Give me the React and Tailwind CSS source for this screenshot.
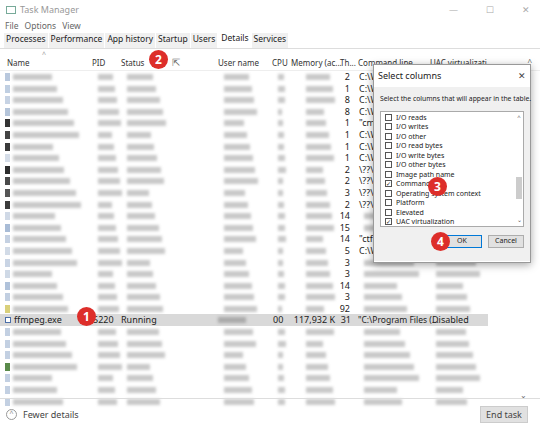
import React from "react";

const cols = [
  { x: 7, w: 70 }, { x: 92, w: 25 }, { x: 121, w: 40 }, { x: 218, w: 35 },
  { x: 272, w: 8 }, { x: 300, w: 30 }, { x: 340, w: 12 }, { x: 358, w: 60 }, { x: 430, w: 45 },
];
const threads = ["2","1","8","8","1","1","1","1","2","2","3","2","14","15","14","5","3","3","14","3","92"];
const cmds = ["C:\\W","C:\\W","C:\\W","C:\\W","\"cmd","C:\\W","C:\\W","C:\\W","\\??\\C","\\??\\C","\\??\\C","\\??\\C","","","\"ctfm","C:\\W","","","","",""];
const icons = ["#b9c8dd","#c0cfe2","#c7d3e4","#b5c5da","#333","#444","#3a3a3a","#d5dde8","#2d2d2d","#4a4a4a","#555","#3c3c3c","#d0d9e6","#a9bcd6","#c5d1e2","#d2dbe7","#c9d4e4","#cfd9e6","#b0c2da","#c2cfe1","#d9d07a"];

function r(i, k) { return ((i * 37 + k * 53) % 17) / 17; }

function BlurRow({ i, thr, cmd, icon }) {
  return (
    <div className="relative h-[11.6px]">
      <div className="absolute left-[5px] top-[2px] w-[5px] h-[8px] blur-[0.5px]" style={{ background: icon }} />
      {[0,1,2,3,4,5,7,8].map((k) => {
        if (k === 7 && cmd) return null;
        const w = cols[k].w * (0.55 + 0.45 * r(i, k));
        return <div key={k} className="absolute top-[3px] h-[6px] bg-[#c8c8c8] blur-[1.5px]" style={{ left: cols[k].x + 6, width: w }} />;
      })}
      <div className="absolute top-0 text-[9px] leading-[11.6px] text-[#222] text-right w-[20px]" style={{ left: 330 }}>{thr}</div>
      {cmd && <div className="absolute left-[359px] top-0 text-[9px] leading-[11.6px] text-[#222]">{cmd}</div>}
    </div>
  );
}

function Badge({ n, x, y }) {
  return <div className="absolute w-[19px] h-[19px] rounded-full bg-[#dd2e2a] text-white text-[12px] font-bold flex items-center justify-center" style={{ left: x, top: y }}>{n}</div>;
}

const opts = [["I/O reads",0],["I/O writes",0],["I/O other",0],["I/O read bytes",0],["I/O write bytes",0],["I/O other bytes",0],["Image path name",0],["Command line",1],["Operating system context",0],["Platform",0],["Elevated",0],["UAC virtualization",1]];

export default function App() {
  return (
    <div className="relative w-[540px] h-[430px] bg-white overflow-hidden text-[#222]" style={{ fontFamily: '"Noto Sans","Open Sans",sans-serif' }}>
      <div className="h-[20px] flex items-center px-[6px] text-[9px] text-[#999]">
        <div className="w-[10px] h-[8px] border border-[#7a9] mr-[4px]" />
        <span>Task Manager</span>
        <div className="ml-auto flex gap-[28px] text-[#aaa] pr-[4px]"><span>—</span><span>☐</span><span>✕</span></div>
      </div>
      <div className="h-[13px] flex gap-[6px] px-[5px] text-[8.5px] text-[#666]"><span>File</span><span>Options</span><span>View</span></div>
      <div className="h-[16px] flex items-end px-[4px] text-[8.5px] border-b border-[#ddd]">
        {["Processes","Performance","App history","Startup","Users"].map(t => <span key={t} className="px-[2px] pb-[2px] bg-[#f0f0f0] mr-[1px]">{t}</span>)}
        <span className="px-[3px] pb-[3px] bg-white">Details</span>
        <span className="px-[2px] pb-[2px] bg-[#f0f0f0]">Services</span>
      </div>
      <div className="relative h-[18px] mt-[4px] border-b border-[#eee] text-[8px] text-[#333]">
        {["Name","PID","Status","User name","CPU","Memory (ac...","Th...","Command line","UAC virtualizati..."].map((t,i)=>(
          <span key={t} className="absolute top-[4px] whitespace-nowrap" style={{ left: [7,92,121,218,272,291,340,358,430][i] }}>{t}</span>
        ))}
        <span className="absolute left-[42px] top-[-3px] text-[7px] text-[#999]">^</span>
        <span className="absolute right-[8px] top-[3px] text-[8px] text-[#666]">^</span>
      </div>
      <div className="relative w-[530px]">
        {threads.map((t,i)=> <BlurRow key={i} i={i} thr={t} cmd={cmds[i]} icon={icons[i]} />)}
        <div className="relative h-[11.6px] bg-[#d9d9d9] w-[488px] text-[9px] leading-[11.6px]">
          <div className="absolute left-[5px] top-[3px] w-[6px] h-[6px] border border-[#4a6ea8] bg-white" />
          <span className="absolute left-[14px]">ffmpeg.exe</span>
          <span className="absolute left-[93px]">5220</span>
          <span className="absolute left-[121px]">Running</span>
          <div className="absolute left-[218px] top-[3px] w-[28px] h-[6px] bg-[#aaa] blur-[1.5px]" />
          <span className="absolute left-[273px]">00</span>
          <span className="absolute left-[292px] w-[43px] text-right">117,932 K</span>
          <span className="absolute left-[337px] w-[14px] text-right">31</span>
          <span className="absolute left-[358px] text-[8.5px]">"C:\Program Files (...</span>
          <span className="absolute left-[432px]">Disabled</span>
        </div>
        {[0,1,2,3,4,5,6].map(i => <BlurRow key={"b"+i} i={i+30} thr="" cmd="" icon={i===3?"#5a8a4a":"#c3d0e2"} />)}
        <div className="absolute right-[2px] top-[0px] h-[330px] w-[8px] flex flex-col justify-end text-[8px] text-[#666]"><span>⌄</span></div>
      </div>
      <div className="absolute left-0 right-0 top-[398px] border-t border-[#ddd] h-[32px] flex items-center px-[6px] text-[9px] text-[#444]">
        <div className="w-[11px] h-[11px] rounded-full border border-[#999] mr-[6px] text-[7px] flex items-center justify-center text-[#888]">^</div>
        <span>Fewer details</span>
        <div className="ml-auto mr-[6px] w-[48px] h-[17px] bg-[#e1e1e1] border border-[#ccc] flex items-center justify-center">End task</div>
      </div>

      {/* dialog */}
      <div className="absolute left-[373px] top-[64px] w-[158px] h-[199px] bg-white border border-[#999] shadow-[0_2px_8px_rgba(0,0,0,0.35)] text-[8px]">
        <div className="flex justify-between px-[4px] pt-[4px] text-[9px]"><span>Select columns</span><span className="text-[#444]">✕</span></div>
        <div className="bg-[#f0f0f0] h-[174px] mt-[4px] px-[6px] pt-[7px]">
          <div className="text-[6.8px] whitespace-nowrap">Select the columns that will appear in the table.</div>
          <div className="mt-[7px] h-[116px] bg-white border border-[#aaa] flex">
            <div className="flex-1 pl-[4px] pt-[1px]">
              {opts.map(([t,c])=>(
                <div key={t} className="h-[9.5px] flex items-center gap-[4px] text-[7px] leading-none whitespace-nowrap">
                  <div className="w-[7px] h-[7px] border border-[#555] text-[6px] leading-[6px] flex items-center justify-center">{c?"✓":""}</div>
                  <span>{t}</span>
                </div>
              ))}
            </div>
            <div className="w-[8px] flex flex-col items-center text-[6px] text-[#555] py-[1px]">
              <span>^</span><div className="w-[6px] h-[22px] bg-[#ccc] mt-[55px]" /><div className="flex-1" /><span>⌄</span>
            </div>
          </div>
          <div className="flex justify-end gap-[6px] mt-[8px]">
            <div className="w-[40px] h-[13px] border border-[#0078d7] bg-[#e1e1e1] flex items-center justify-center text-[7px]">OK</div>
            <div className="w-[36px] h-[13px] border border-[#adadad] bg-[#e1e1e1] flex items-center justify-center text-[7px]">Cancel</div>
          </div>
        </div>
      </div>

      <div className="absolute left-[172px] top-[55px] text-[10px] text-[#666]">⇱</div>
      <Badge n="2" x={149} y={50} />
      <Badge n="1" x={77} y={307} />
      <Badge n="3" x={428} y={177} />
      <Badge n="4" x={431} y={232} />
    </div>
  );
}
